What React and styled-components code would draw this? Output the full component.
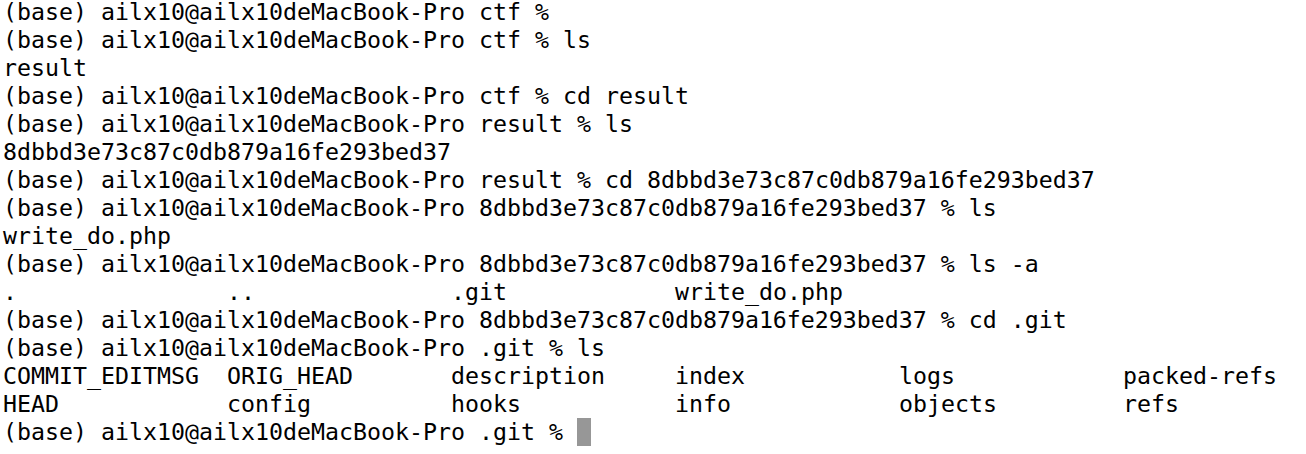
import React from "react";
import styled, { createGlobalStyle } from "styled-components";

const Global = createGlobalStyle`
  html, body { margin: 0; padding: 0; background: #ffffff; }
`;

const Terminal = styled.div`
  width: 1306px;
  height: 454px;
  box-sizing: border-box;
  padding: 0 0 0 3px;
  background: #ffffff;
  color: #000000;
  font-family: "DejaVu Sans Mono", "Liberation Mono", monospace;
  font-size: 23.25px;
  line-height: 23.5px;
  overflow: hidden;
`;

const Line = styled.div`
  white-space: pre;
  height: 28px;
  display: flex;
  align-items: flex-start;
`;

const Columns = styled.div`
  display: grid;
  grid-template-columns: repeat(${(p) => p.$cols}, 224px);
  height: 28px;
  align-items: start;
  white-space: pre;
`;

const Cursor = styled.span`
  display: inline-block;
  width: 14px;
  height: 28px;
  margin-top: -2px;
  background: #979797;
`;

const P = "(base) ailx10@ailx10deMacBook-Pro ";
const H = "8dbbd3e73c87c0db879a16fe293bed37";

export default function App() {
  return (
    <>
      <Global />
      <Terminal>
        <Line>{P}ctf %</Line>
        <Line>{P}ctf % ls</Line>
        <Line>result</Line>
        <Line>{P}ctf % cd result</Line>
        <Line>{P}result % ls</Line>
        <Line>{H}</Line>
        <Line>{P}result % cd {H}</Line>
        <Line>{P}{H} % ls</Line>
        <Line>write_do.php</Line>
        <Line>{P}{H} % ls -a</Line>
        <Columns $cols={4}>
          <span>.</span>
          <span>..</span>
          <span>.git</span>
          <span>write_do.php</span>
        </Columns>
        <Line>{P}{H} % cd .git</Line>
        <Line>{P}.git % ls</Line>
        <Columns $cols={6}>
          <span>COMMIT_EDITMSG</span>
          <span>ORIG_HEAD</span>
          <span>description</span>
          <span>index</span>
          <span>logs</span>
          <span>packed-refs</span>
        </Columns>
        <Columns $cols={6}>
          <span>HEAD</span>
          <span>config</span>
          <span>hooks</span>
          <span>info</span>
          <span>objects</span>
          <span>refs</span>
        </Columns>
        <Line>{P}.git % <Cursor /></Line>
      </Terminal>
    </>
  );
}
